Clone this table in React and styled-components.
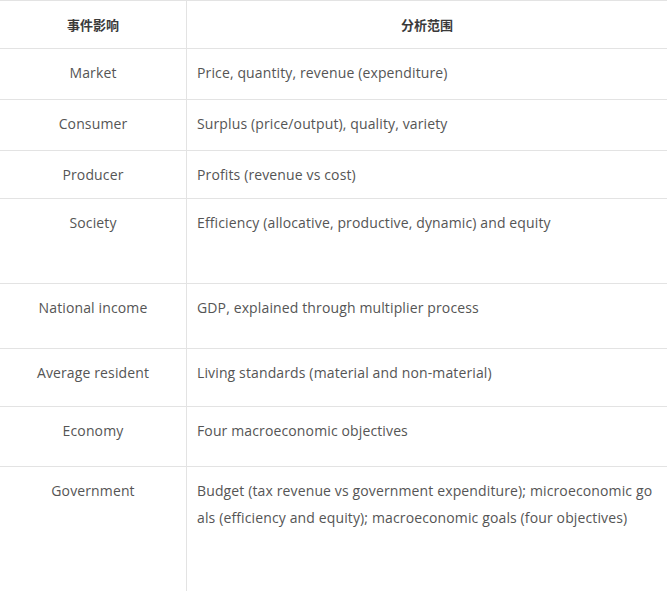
import React from 'react';
import styled, { createGlobalStyle } from 'styled-components';

const GlobalStyle = createGlobalStyle`
  html, body {
    margin: 0;
    padding: 0;
    background: #fff;
  }
  body {
    font-family: "Open Sans", "Noto Sans CJK SC", sans-serif;
  }
`;

const Table = styled.div`
  width: 667px;
  display: grid;
  grid-template-columns: 187px 1fr;
  border-top: 1px solid #e3e3e3;
  color: #555;
`;

const Cell = styled.div`
  box-sizing: border-box;
  height: ${(p) => p.h}px;
  padding: 10px 10px 0 10px;
  font-size: 14px;
  letter-spacing: 0.13px;
  line-height: 27px;
  word-break: break-all;
  border-bottom: ${(p) => (p.last ? 'none' : '1px solid #e3e3e3')};
  border-right: ${(p) => (p.left ? '1px solid #e3e3e3' : 'none')};
  text-align: ${(p) => (p.center ? 'center' : 'left')};
`;

const HeadCell = styled(Cell)`
  font-family: "Noto Sans CJK SC", sans-serif;
  font-size: 13px;
  letter-spacing: 0;
  font-weight: 700;
  color: #3a3a3a;
  text-align: center;
`;

const rows = [
  ['Market', 'Price, quantity, revenue (expenditure)', 51],
  ['Consumer', 'Surplus (price/output), quality, variety', 51],
  ['Producer', 'Profits (revenue vs cost)', 48],
  ['Society', 'Efficiency (allocative, productive, dynamic) and equity', 85],
  ['National income', 'GDP, explained through multiplier process', 65],
  ['Average resident', 'Living standards (material and non-material)', 58],
  ['Economy', 'Four macroeconomic objectives', 60],
  [
    'Government',
    'Budget (tax revenue vs government expenditure); microeconomic goals (efficiency and equity); macroeconomic goals (four objectives)',
    125,
  ],
];

const App = () => (
  <>
    <GlobalStyle />
    <Table>
      <HeadCell h={48} left>事件影响</HeadCell>
      <HeadCell h={48}>分析范围</HeadCell>
      {rows.map(([who, scope, h], i) => (
        <React.Fragment key={who}>
          <Cell h={h} left center last={i === rows.length - 1}>{who}</Cell>
          <Cell h={h} last={i === rows.length - 1}>{scope}</Cell>
        </React.Fragment>
      ))}
    </Table>
  </>
);

export default App;
